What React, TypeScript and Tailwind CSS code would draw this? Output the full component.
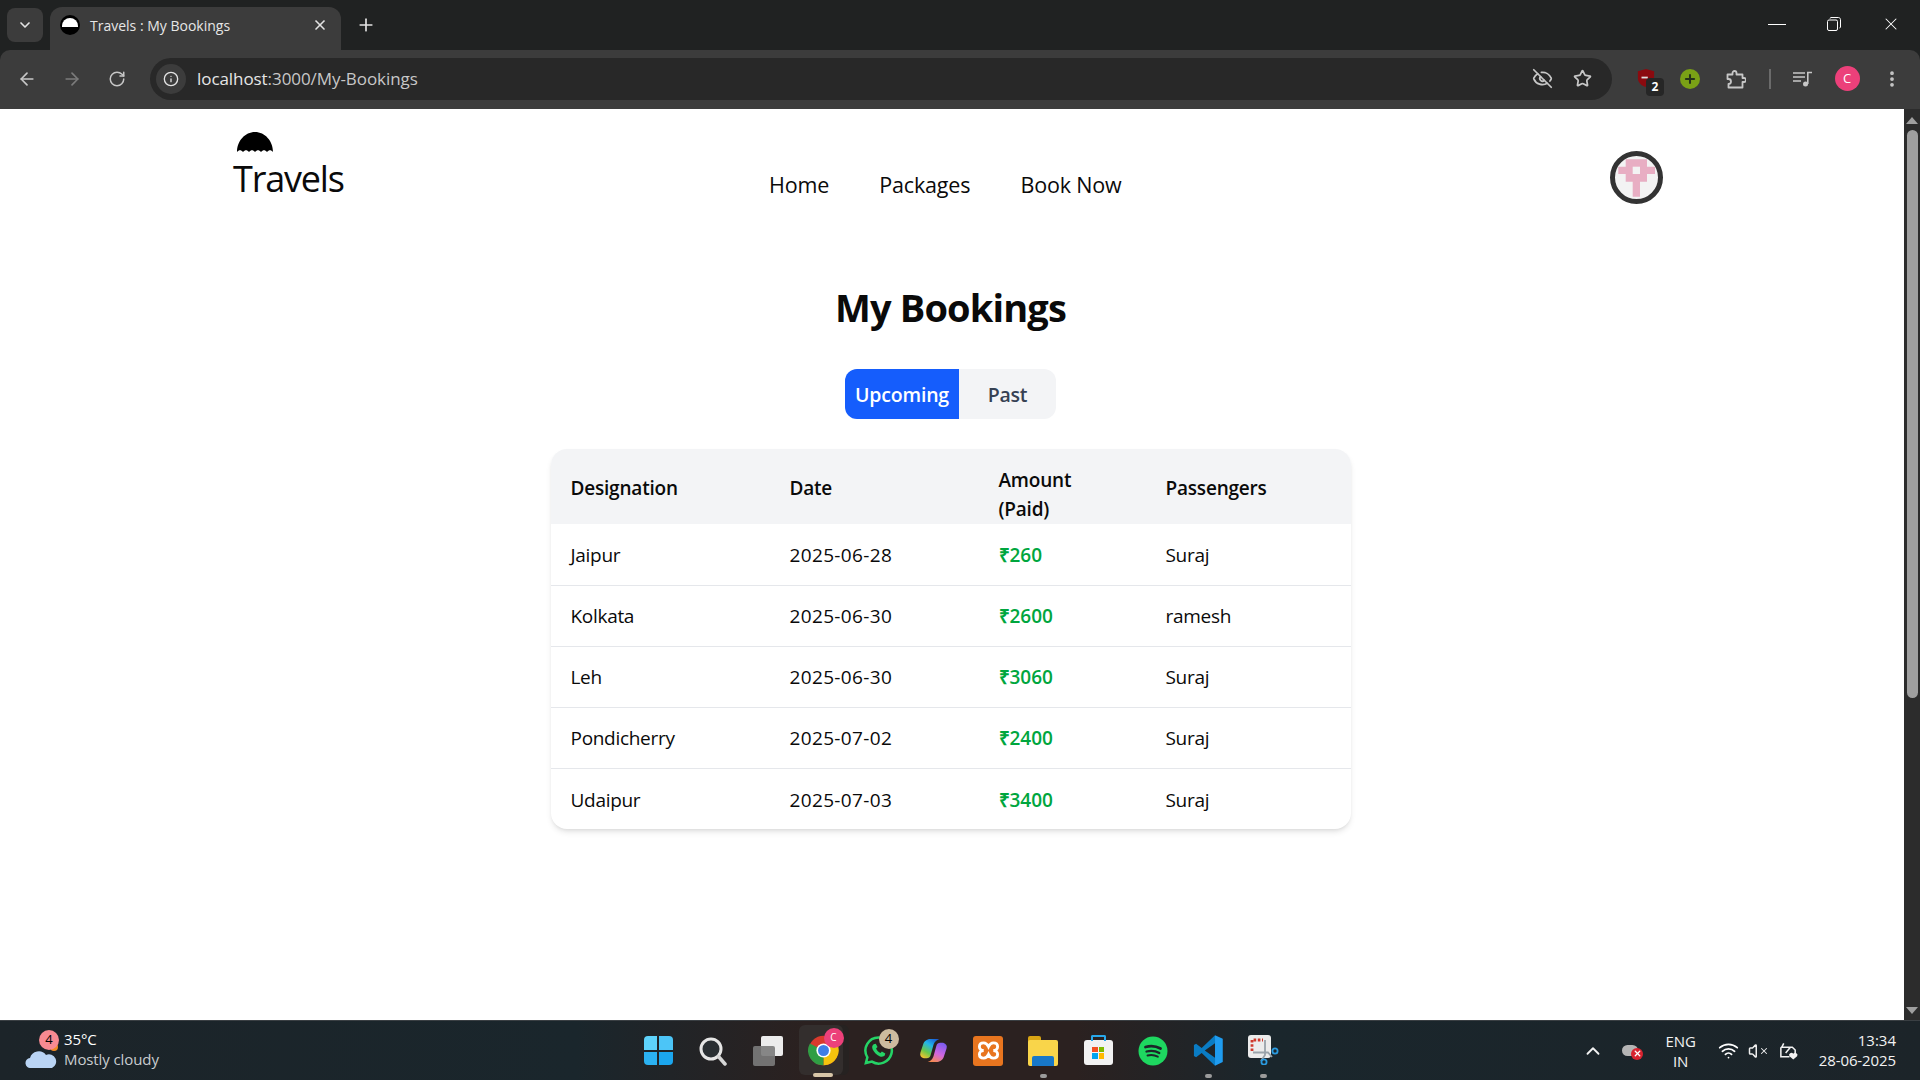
import { ArrowLeft, ArrowRight, ChevronDown, ChevronUp, EllipsisVertical, EyeOff, Info, Plus, RotateCw, Star, Volume, Wifi, X } from "lucide-react"

const bookings = [
  { place: "Jaipur", date: "2025-06-28", amount: "₹260", passenger: "Suraj" },
  { place: "Kolkata", date: "2025-06-30", amount: "₹2600", passenger: "ramesh" },
  { place: "Leh", date: "2025-06-30", amount: "₹3060", passenger: "Suraj" },
  { place: "Pondicherry", date: "2025-07-02", amount: "₹2400", passenger: "Suraj" },
  { place: "Udaipur", date: "2025-07-03", amount: "₹3400", passenger: "Suraj" },
]

function Umbrella({ className }: { className?: string }) {
  return (
    <svg viewBox="0 0 36 20" className={className}>
      <path d="M0 20C0 9 8 0 18 0s18 9 18 20c-2-2.400-4-2.400-6 0-2-2.400-4-2.400-6 0-2-2.400-4-2.400-6 0-2-2.400-4-2.400-6 0-2-2.400-4-2.400-6 0-2-2.400-4-2.400-6 0z" fill="#000" />
    </svg>
  )
}

function Avatar() {
  return (
    <div className="w-[53px] h-[53px] shrink-0 rounded-full border-[5px] border-[#333] bg-[#f3f3f3] overflow-hidden">
      <svg viewBox="5 5 43 43" className="w-full h-full">
        <path d="M15.700 8.300H37V15.700H45V23H37V30.700H30V45.700H22.700V30.700H15.700V23H8.300V15.700H15.700Z" fill="#e8aec3" />
        <rect x="22.700" y="15.700" width="7.300" height="7.300" fill="#f3f3f3" />
      </svg>
    </div>
  )
}

function Scrollbar() {
  return (
    <div className="w-4 shrink-0 bg-[#2c2c2c] flex flex-col items-center">
      <svg viewBox="0 0 16 16" className="w-4 h-4 mt-[3px] shrink-0"><path d="M2 12L8 5L14 12Z" fill="#9f9f9f" /></svg>
      <div className="w-[11px] h-[568px] mt-[2px] rounded-full bg-[#9f9f9f]" />
      <svg viewBox="0 0 16 16" className="w-4 h-4 mt-auto mb-[1px] shrink-0"><path d="M2 4L8 11L14 4Z" fill="#9f9f9f" /></svg>
    </div>
  )
}

function TabBar() {
  return (
    <div className="h-[50px] bg-[#202222] flex items-end pl-[7px] text-white">
      <div className="w-[36px] h-[34px] mb-[8px] rounded-lg bg-[#3c3c3c] flex items-center justify-center">
        <ChevronDown size={16} strokeWidth={2.5} color="#e3e3e3" />
      </div>
      <div className="w-[291px] h-[43px] ml-[7px] rounded-t-xl bg-[#3c3c3c] flex items-center pl-[10px] pr-[13px] pb-[7px]">
        <div className="w-5 h-5 rounded-full bg-black flex items-start justify-center overflow-hidden">
          <div className="w-4 h-[9px] mt-[3px] rounded-t-full bg-white" />
        </div>
        <span className="ml-[10px] text-[14px] text-[#e6e6e6]">Travels : My Bookings</span>
        <X size={16} strokeWidth={2.5} color="#e3e3e3" className="ml-auto" />
      </div>
      <Plus size={20} strokeWidth={2} color="#e3e3e3" className="ml-[15px] mb-[15px]" />
      <div className="ml-auto flex items-center self-start h-[48px]">
        <div className="w-[18px] h-px bg-white mr-[41px]" />
        <svg viewBox="0 0 14 14" className="w-[14px] h-[14px] mr-[40px]" fill="none" stroke="#fff" strokeWidth="1">
          <rect x="0.5" y="3" width="10" height="10.5" rx="1.500" />
          <path d="M3 1.500C3 1 3.500.5 4 .5h7.500c1 0 2 1 2 2V10c0 .5-.5 1-1 1" />
        </svg>
        <X size={20} strokeWidth={1.25} color="#fff" className="mr-[19px]" />
      </div>
    </div>
  )
}

function Toolbar() {
  return (
    <div className="h-[59px] bg-[#3c3c3c] rounded-t-[10px] flex items-center text-[#c7c7c7] pb-[2px]">
      <div className="w-[150px] shrink-0 flex items-center pl-[17px] gap-[25px]">
        <ArrowLeft size={20} color="#c7c7c7" />
        <ArrowRight size={20} color="#7b7b7b" />
        <RotateCw size={18} color="#c7c7c7" className="ml-[1px]" />
      </div>
      <div className="w-[1462px] h-[42px] shrink-0 rounded-full bg-[#282828] flex items-center pl-[6px] pr-[20px]">
        <div className="w-[30px] h-[30px] rounded-full bg-[#3c3c3c] flex items-center justify-center">
          <Info size={16} color="#e3e3e3" />
        </div>
        <span className="ml-[11px] text-[17px] text-[#c7c7c7] tracking-[-0.07px]"><span className="text-[#e6e6e6]">localhost</span>:3000/My-Bookings</span>
        <EyeOff size={21} className="ml-auto" />
        <Star size={19} strokeWidth={2.2} className="ml-[20px]" />
      </div>
      <div className="w-11 ml-[12px] flex justify-center relative">
        <svg viewBox="0 0 20 22" className="w-[18px] h-[20px] -mt-[1px]">
          <path d="M10 1l9 2.500V11c0 5-4 9-9 10-5-1-9-5-9-10V3.500z" fill="#8b0a0f" />
          <rect x="5" y="9.500" width="7" height="2" fill="#ddd" />
        </svg>
        <span className="absolute left-[22px] top-[9px] w-[18px] h-[18px] rounded bg-[#262626] flex items-center justify-center text-[12px] font-bold text-white">2</span>
      </div>
      <div className="w-11 flex justify-center">
        <div className="w-5 h-5 rounded-full bg-[#7aa116] flex items-center justify-center">
          <Plus size={14} strokeWidth={3.5} color="#26331a" />
        </div>
      </div>
      <div className="w-11 ml-[2px] flex justify-center">
        <svg viewBox="0 0 20 20" className="w-5 h-5" fill="none" stroke="#c7c7c7" strokeWidth="1.800" strokeLinejoin="round">
          <path d="M1.500 5.500H6.500V4a2 2 0 0 1 4 0v1.500H16.500V9H18a2 2 0 0 1 0 4H16.500V18.500H2.500V15a2.500 2.500 0 0 0 0-5H1.500z" />
        </svg>
      </div>
      <div className="w-[2px] h-[20px] ml-[11px] bg-[#6b6b6b]" />
      <div className="w-11 ml-[10px] flex justify-center">
        <svg viewBox="0 0 20 16" className="w-5 h-4" fill="none" stroke="#c7c7c7" strokeWidth="1.600">
          <path d="M0 2h12M0 6h12M0 10h8M14.800 13V1.500H19" />
          <circle cx="12.500" cy="13" r="2.500" fill="#c7c7c7" stroke="none" />
        </svg>
      </div>
      <div className="w-11 flex justify-center">
        <div className="w-[25px] h-[25px] rounded-full bg-[#ec407a] flex items-center justify-center text-[13px] text-white">C</div>
      </div>
      <div className="w-11 ml-[1px] flex justify-center"><EllipsisVertical size={20} strokeWidth={2.5} /></div>
    </div>
  )
}

function Page() {
  return (
    <div className="flex-1 min-w-0 bg-white text-[#0a0a0a]">
      <header className="flex items-start pl-[233px] pr-[241px] pt-[23px]">
        <div className="w-[110px] shrink-0">
          <Umbrella className="w-[36px] h-[20px] ml-[4px]" />
          <div className="text-[36px] leading-[46px] tracking-[-1.2px] mt-[4px]">Travels</div>
        </div>
        <nav className="ml-[426px] mt-[39px] flex gap-[50px] text-[21.5px] leading-[28px] tracking-[-0.15px]">
          <a>Home</a>
          <a>Packages</a>
          <a>Book Now</a>
        </nav>
        <div className="ml-auto mt-[19px]"><Avatar /></div>
      </header>
      <main className="flex flex-col items-center pr-[3px] mt-[79px]">
        <h1 className="text-[38px] leading-[48px] font-bold tracking-[-0.85px]">My Bookings</h1>
        <div className="flex mt-[38px] rounded-xl overflow-hidden text-[19.5px] font-semibold tracking-[-0.2px]">
          <button className="w-[114px] h-[50px] pt-[1px] bg-[#155dfc] text-white">Upcoming</button>
          <button className="w-[97px] h-[50px] pt-[1px] bg-[#f3f4f6] text-[#364153]">Past</button>
        </div>
        <div className="w-[800px] mt-[30px] rounded-2xl overflow-hidden shadow-md bg-white">
          <table className="w-full table-fixed text-left text-[19px]">
            <thead className="bg-[#f3f4f6]">
              <tr className="h-[75px] tracking-[-0.2px]">
                <th className="w-[219px] pl-5 pt-[3px] font-semibold">Designation</th>
                <th className="w-[209px] pl-5 pt-[3px] font-semibold">Date</th>
                <th className="w-[167px] pl-5 pr-5 pt-[17px] align-top font-semibold leading-[29px]">Amount (Paid)</th>
                <th className="pl-5 pt-[3px] font-semibold">Passengers</th>
              </tr>
            </thead>
            <tbody>
              {bookings.map((b, i) => (
                <tr key={b.place} className={i < bookings.length - 1 ? "h-[61px] border-b border-[#e5e7eb]" : "h-[61px]"}>
                  <td className="pl-5 pt-[2px] tracking-[-0.3px]">{b.place}</td>
                  <td className="pl-5 pt-[2px] tracking-[0.35px]">{b.date}</td>
                  <td className="pl-5 pt-[2px] font-semibold text-[#00a63e]">{b.amount}</td>
                  <td className="pl-5 pt-[2px] tracking-[-0.3px]">{b.passenger}</td>
                </tr>
              ))}
            </tbody>
          </table>
        </div>
      </main>
    </div>
  )
}

function WinLogo() {
  return (
    <div className="w-[29px] h-[29px] grid grid-cols-2 gap-[2px]">
      <div className="rounded-tl-sm bg-[#5ed3fb]" />
      <div className="rounded-tr-sm bg-[#4cc5f7]" />
      <div className="rounded-bl-sm bg-[#2bb2f2]" />
      <div className="rounded-br-sm bg-[#1ba6ee]" />
    </div>
  )
}

function TaskIcon({ children, dot }: { children: React.ReactNode; dot?: boolean }) {
  return (
    <div className="relative w-[55px] h-[60px] flex items-center justify-center">
      {children}
      {dot && <div className="absolute bottom-[3px] w-[7px] h-[4px] rounded-full bg-[#9b9b9b]" />}
    </div>
  )
}

function Taskbar() {
  return (
    <div className="h-[60px] bg-[linear-gradient(90deg,#1c2429_0%,#1a262c_30%,#2b2120_42%,#2b2120_56%,#1a262c_66%,#1c2429_100%)] border-t border-[#3a3f43] flex items-center text-white">
      <div className="flex-1 flex items-center pl-[25px]">
        <div className="relative w-[38px] h-[44px]">
          <div className="absolute left-[25px] top-[14px] w-[8px] h-[8px] rounded-full bg-[#f08a24]" />
          <svg viewBox="0 0 32 20" className="absolute left-0 bottom-[5px] w-[32px] h-[20px]">
            <path d="M6 20a5 5 0 0 1-1-10 9 9 0 0 1 16-3 7 7 0 0 1 6 13z" fill="#b9d4f4" />
          </svg>
          <div className="absolute left-[14px] top-[1px] w-5 h-5 rounded-full bg-[#f88a92] flex items-center justify-center text-[13px] text-black">4</div>
        </div>
        <div className="ml-[1px] -mt-[4px] text-[15px] leading-[20px] tracking-[-0.1px]">
          <div>35°C</div>
          <div className="text-[#c9cccf]">Mostly cloudy</div>
        </div>
      </div>
      <div className="flex items-center">
        <TaskIcon><WinLogo /></TaskIcon>
        <TaskIcon>
          <svg viewBox="0 0 30 30" className="w-[30px] h-[30px]" fill="none">
            <circle cx="13" cy="13" r="10" stroke="#e6e6e6" strokeWidth="3" fill="#2a2f33" />
            <path d="M20.500 20.500L27 28" stroke="#d6d6d6" strokeWidth="3.500" strokeLinecap="round" />
          </svg>
        </TaskIcon>
        <TaskIcon>
          <div className="relative w-[30px] h-[30px]">
            <div className="absolute right-0 top-0 w-[22px] h-[20px] rounded-[2px] bg-[#ececec]" />
            <div className="absolute left-0 bottom-0 w-[22px] h-[20px] rounded-[2px] bg-[#7b7b7b]/90" />
          </div>
        </TaskIcon>
        <TaskIcon>
          <div className="absolute top-[4px] left-[9px] w-[44px] h-[50px] rounded-md bg-[#262221]" />
          <div className="absolute top-[4px] left-[3px] w-[44px] h-[50px] rounded-md bg-[#332e2d]" />
          <svg viewBox="0 0 48 48" className="relative w-[31px] h-[31px]">
            <circle cx="24" cy="24" r="23" fill="#d93a2d" />
            <path d="M24 24L44 12A23 23 0 0 1 24 47Z" fill="#f4c20d" />
            <path d="M24 24L24 47A23 23 0 0 1 3 13Z" fill="#2f9e44" />
            <circle cx="24" cy="24" r="11" fill="#fff" />
            <circle cx="24" cy="24" r="8.500" fill="#3f7ee8" />
          </svg>
          <div className="absolute left-[28px] top-[7px] w-5 h-5 rounded-full bg-[#ec407a] flex items-center justify-center text-[10px] text-white">C</div>
          <div className="absolute bottom-[4px] left-[17px] w-5 h-[4px] rounded-full bg-[#d8c6a8]" />
        </TaskIcon>
        <TaskIcon>
          <svg viewBox="0 0 32 32" className="w-[31px] h-[31px]" fill="none">
            <path d="M16 2.500A13.500 13.500 0 0 0 4.500 23L3 29l6.200-1.500A13.500 13.500 0 1 0 16 2.500Z" stroke="#25d366" strokeWidth="2.600" />
            <path d="M11 9.500c-1.500 1-2 3-1 5.500 1.500 3 4 5.500 7 7 2.500 1 4.500.5 5.500-1l.5-2-3.500-2-1.500 1.500c-2-.8-3.500-2.300-4.500-4.500l1.500-1.500-1.800-3.500z" fill="#25d366" />
          </svg>
          <div className="absolute left-[28px] top-[8px] w-5 h-5 rounded-full bg-[#cdbb9f] flex items-center justify-center text-[13px] text-black">4</div>
        </TaskIcon>
        <TaskIcon>
          <svg viewBox="0 0 30 30" className="w-[29px] h-[29px]">
            <defs>
              <linearGradient id="cpa" x1="0.8" y1="0" x2="0.2" y2="1">
                <stop offset="0" stopColor="#1a5fd8" />
                <stop offset="0.35" stopColor="#22b5e8" />
                <stop offset="0.7" stopColor="#6ac84a" />
                <stop offset="1" stopColor="#f2c230" />
              </linearGradient>
              <linearGradient id="cpb" x1="0.7" y1="0" x2="0.3" y2="1">
                <stop offset="0" stopColor="#7c5cf0" />
                <stop offset="0.55" stopColor="#d066e0" />
                <stop offset="1" stopColor="#f58a50" />
              </linearGradient>
            </defs>
            <path d="M12 3h9c-3 1-5 3-6 6l-3 11c-.5 2-2 3-4 3H5c-3-1-4.500-3-3.500-6l3-9c1-3 4.500-5 7.500-5z" fill="url(#cpa)" />
            <path d="M18 27H9c3-1 5-3 6-6l3-11c.5-2 2-3 4-3h3c3 1 4.500 3 3.500 6l-3 9c-1 3-4.500 5-7.500 5z" fill="url(#cpb)" />
          </svg>
        </TaskIcon>
        <TaskIcon>
          <div className="w-[30px] h-[30px] rounded-[3px] bg-[#e8751f] flex items-center justify-center">
            <svg viewBox="0 0 24 24" className="w-[23px] h-[23px]" fill="none" stroke="#fff" strokeWidth="3">
              <path d="M7 4c-3 0-4.500 1.800-4.500 4S4.500 12 7 12c-2.500 0-4.500 1.800-4.500 4S4 20 7 20c3 0 4-2 5-4 1 2 2 4 5 4s4.500-1.800 4.500-4-2-4-4.500-4c2.500 0 4.500-1.800 4.500-4S20 4 17 4s-4 2-5 4c-1-2-2-4-5-4z" />
            </svg>
          </div>
        </TaskIcon>
        <TaskIcon dot>
          <div className="relative w-[30px] h-[30px]">
            <div className="absolute left-0 top-0 w-[13px] h-[8px] rounded-t-[2px] bg-[#d9a514]" />
            <div className="absolute left-0 bottom-0 top-[4px] right-0 rounded-[2px] bg-[#f9d54a]" />
            <div className="absolute left-[4px] right-[4px] bottom-0 h-[10px] rounded-t-[2px] bg-[#1878c8]" />
          </div>
        </TaskIcon>
        <TaskIcon>
          <div className="relative w-[29px] h-[25px] mt-[4px] rounded-[3px] bg-[#f2f2f2] flex items-center justify-center">
            <div className="absolute -top-[5px] left-[7px] w-[15px] h-[6px] border-2 border-b-0 border-[#28a8ea] rounded-t-[2px]" />
            <div className="grid grid-cols-2 gap-[1px] w-[12px] h-[12px]">
              <div className="bg-[#f25022]" />
              <div className="bg-[#7fba00]" />
              <div className="bg-[#00a4ef]" />
              <div className="bg-[#ffb900]" />
            </div>
          </div>
        </TaskIcon>
        <TaskIcon>
          <svg viewBox="0 0 30 30" className="w-[30px] h-[30px]" fill="none" stroke="#1c2429" strokeLinecap="round">
            <circle cx="15" cy="15" r="14.500" fill="#1ed760" stroke="none" />
            <path d="M7.500 11c5-1.500 10.500-1 15 1.500" strokeWidth="2.800" />
            <path d="M8.500 15.500c4.500-1.200 9-.7 12.800 1.500" strokeWidth="2.300" />
            <path d="M9.500 19.500c3.500-.9 7.200-.5 10.300 1.200" strokeWidth="1.900" />
          </svg>
        </TaskIcon>
        <TaskIcon dot>
          <svg viewBox="0 0 100 100" className="w-[31px] h-[31px]">
            <path d="M71 99L96 87V12L71 1z" fill="#1f9cf0" />
            <path d="M71 1L28 42 10 28 3 32v36l7 4 18-14 43 41V73L38 50 71 27z" fill="#0a7cc4" />
          </svg>
        </TaskIcon>
        <TaskIcon dot>
          <svg viewBox="0 0 32 30" className="w-[32px] h-[30px] -mt-[1px]" fill="none">
            <rect x="1" y="0" width="23" height="23" rx="3" fill="#ececec" />
            <path d="M5 16V5H16" stroke="#d0392c" strokeWidth="2.800" strokeDasharray="2.600 1.600" />
            <path d="M6 17.500H21L25 22M18 5V20L14 26" stroke="#9aa3aa" strokeWidth="1.800" />
            <circle cx="28" cy="16" r="2.600" stroke="#2a9adf" strokeWidth="1.800" />
            <circle cx="17" cy="27" r="2.600" stroke="#2a9adf" strokeWidth="1.800" />
          </svg>
        </TaskIcon>
      </div>
      <div className="flex-1 flex items-center justify-end pr-[24px]">
        <ChevronUp size={22} color="#f2f2f2" strokeWidth={2} />
        <div className="relative w-[20px] h-[14px] ml-[18px]">
          <div className="absolute left-0 top-[1px] w-[16px] h-[11px] rounded-full bg-[#b5b5b5]" />
          <div className="absolute left-[9px] top-[4px] w-[12px] h-[12px] rounded-full bg-[#d8232f] flex items-center justify-center">
            <X size={9} strokeWidth={3.5} color="#fff" />
          </div>
        </div>
        <div className="ml-[23px] text-[15px] leading-[20px] text-center text-[#f2f2f2] tracking-[-0.1px]">
          <div>ENG</div>
          <div>IN</div>
        </div>
        <Wifi size={21} color="#fff" className="ml-[22px]" />
        <div className="relative ml-[9px] w-[21px] h-[20px] flex items-center">
          <Volume size={18} color="#eee" />
          <X size={10} color="#eee" strokeWidth={2.5} className="absolute right-0 top-[5px]" />
        </div>
        <svg viewBox="0 0 22 20" className="ml-[9px] w-[21px] h-[20px]" fill="none" stroke="#f2f2f2" strokeWidth="1.600">
          <path d="M3 6h12l3 3v5M3 6v10h9M6 2l-2 4M8 12l5-6" />
          <path d="M16 19l-4-3.500a2 2 0 0 1 4-2.500 2 2 0 0 1 4 2.500z" fill="#f2f2f2" stroke="none" />
        </svg>
        <div className="ml-[20px] -mt-[1px] text-[15px] leading-[20px] text-right text-[#f2f2f2]">
          <div>13:34</div>
          <div className="tracking-[-0.1px]">28-06-2025</div>
        </div>
      </div>
    </div>
  )
}

export default function App() {
  return (
    <div className="w-[1920px] h-[1080px] flex flex-col overflow-hidden bg-[#202222] font-['Open_Sans','Liberation_Sans',sans-serif]">
      <TabBar />
      <Toolbar />
      <div className="flex-1 min-h-0 flex">
        <Page />
        <Scrollbar />
      </div>
      <Taskbar />
    </div>
  )
}
